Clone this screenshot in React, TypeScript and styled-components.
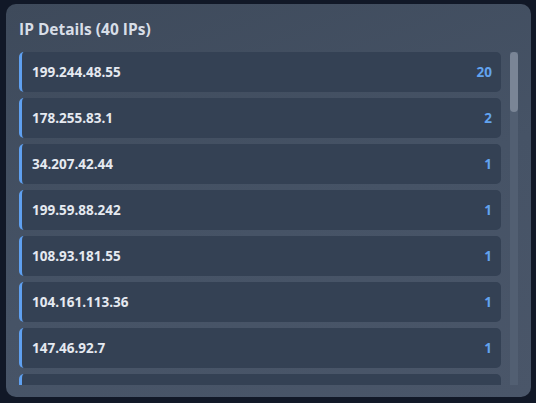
import React, { useRef, useState, useEffect } from "react";
import styled, { createGlobalStyle } from "styled-components";

const Global = createGlobalStyle`
  html, body { margin: 0; padding: 0; background: #111827; }
  body { font-family: "Open Sans", "Liberation Sans", sans-serif; }
  * { box-sizing: border-box; }
`;

const Page = styled.div`
  width: 536px;
  height: 403px;
  padding: 4px 5px 6px 6px;
  background: #111827;
`;

const Card = styled.section`
  height: 100%;
  border-radius: 10px;
  background: linear-gradient(160deg, #3e4a5b 0%, #465366 55%, #4a5669 100%);
  padding: 13px 13px 12px 13px;
  display: flex;
  flex-direction: column;
`;

const Title = styled.h2`
  margin: 0 0 11px 0;
  font-size: 15.5px;
  line-height: 24px;
  font-weight: 700;
  color: #d8dee7;
`;

const Body = styled.div`
  flex: 1;
  min-height: 0;
  display: flex;
  gap: 9px;
`;

const List = styled.div`
  flex: 1;
  min-width: 0;
  overflow-y: auto;
  scrollbar-width: none;
  display: flex;
  flex-direction: column;
  gap: 6px;
  &::-webkit-scrollbar { display: none; }
`;

const Track = styled.div`
  flex: 0 0 8px;
  background: #525f72;
`;

const Thumb = styled.div`
  width: 8px;
  border-radius: 4px;
  background: #7a8596;
`;

const Row = styled.div`
  flex: 0 0 40px;
  display: flex;
  align-items: center;
  justify-content: space-between;
  padding: 0 9px 0 10px;
  background: #344154;
  border-left: 3px solid #5fa0f0;
  border-radius: 5px;
`;

const Ip = styled.span`
  font-size: 13.5px;
  font-weight: 700;
  color: #e5e9f0;
`;

const Count = styled.span`
  font-size: 13.5px;
  font-weight: 700;
  color: #62a3ef;
`;

const base: [string, number][] = [
  ["199.244.48.55", 20],
  ["178.255.83.1", 2],
  ["34.207.42.44", 1],
  ["199.59.88.242", 1],
  ["108.93.181.55", 1],
  ["104.161.113.36", 1],
  ["147.46.92.7", 1],
];

const extra: [string, number][] = Array.from({ length: 33 }, (_, i) => [
  `${52 + i}.${(i * 37) % 255}.${(i * 91) % 255}.${(i * 13) % 250 + 3}`,
  1,
]);

const ips = [...base, ...extra];

export default function App() {
  const ref = useRef<HTMLDivElement>(null);
  const [thumb, setThumb] = useState({ top: 0, height: 60 });

  const update = () => {
    const el = ref.current;
    if (!el) return;
    const ratio = el.clientHeight / el.scrollHeight;
    const h = Math.max(20, el.clientHeight * ratio);
    const top =
      (el.scrollTop / Math.max(1, el.scrollHeight - el.clientHeight)) *
      (el.clientHeight - h);
    setThumb({ top, height: h });
  };

  useEffect(update, []);

  return (
    <Page>
      <Global />
      <Card>
        <Title>IP Details (40 IPs)</Title>
        <Body>
          <List ref={ref} onScroll={update}>
            {ips.map(([ip, n]) => (
              <Row key={ip}>
                <Ip>{ip}</Ip>
                <Count>{n}</Count>
              </Row>
            ))}
          </List>
          <Track>
            <Thumb style={{ marginTop: thumb.top, height: thumb.height }} />
          </Track>
        </Body>
      </Card>
    </Page>
  );
}
